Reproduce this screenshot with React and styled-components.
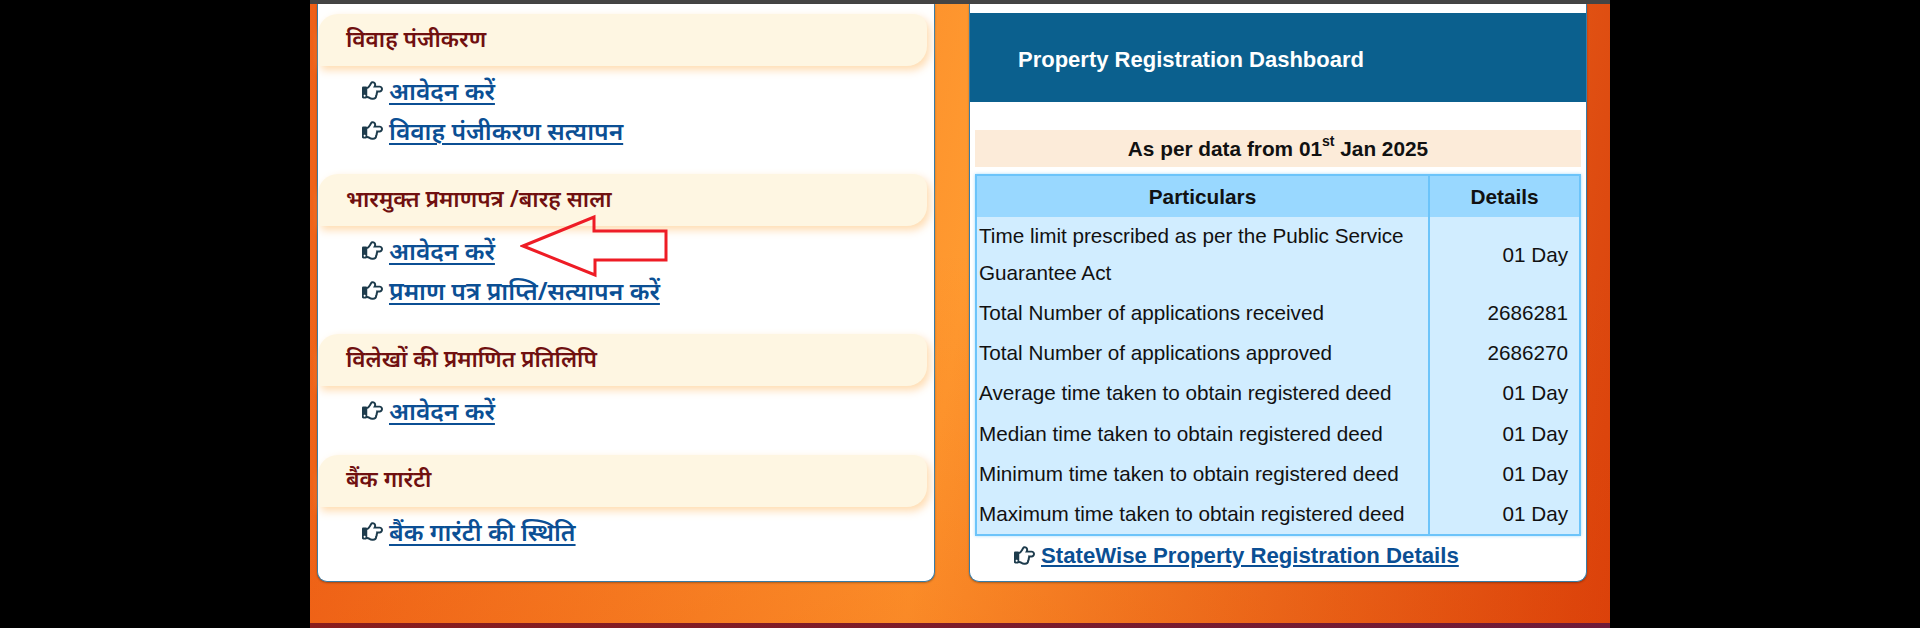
import styled, { createGlobalStyle } from "styled-components";
import { FaRegHandPointRight } from "react-icons/fa";

const GlobalStyle = createGlobalStyle`
  html, body {
    margin: 0;
    padding: 0;
    background: #000;
  }
  body {
    font-family: "Liberation Sans", Arial, sans-serif;
  }
`;

const Page = styled.div`
  width: 1300px;
  height: 628px;
  margin-left: 310px;
  box-sizing: border-box;
  overflow: hidden;
  display: flex;
  flex-direction: column;
  background:
    linear-gradient(180deg, rgba(230, 70, 0, 0) 40%, rgba(230, 70, 0, 0.2) 100%),
    linear-gradient(100deg, #ee6018 0%, #ff9a30 50%, #d9400c 100%);
`;

const TopStrip = styled.div`
  height: 4px;
  flex: none;
  background: #444;
`;

const Columns = styled.div`
  flex: 1;
  display: flex;
  gap: 34px;
  padding: 0 23px 0 7px;
  align-items: flex-start;
`;

const Panel = styled.div`
  box-sizing: border-box;
  width: 618px;
  height: 578px;
  background: #fff;
  border: 1px solid #3a7ca5;
  border-top: none;
  border-radius: 0 0 10px 10px;
  box-shadow: 0 1px 2px rgba(0, 0, 0, 0.3);
`;

const LeftPanel = styled(Panel)`
  padding-top: 10px;
`;

const Section = styled.section`
  margin-bottom: ${(props) => props.gap}px;
`;

const SectionTitle = styled.h3`
  box-sizing: border-box;
  margin: 0;
  width: 609px;
  height: 52px;
  padding: 0 0 4px 28px;
  display: flex;
  align-items: center;
  background: #fef6e2;
  border-radius: 20px 14px 20px 0;
  box-shadow: 3px 4px 8px rgba(255, 200, 130, 0.65);
  color: #701010;
  font-family: "Noto Sans", "Liberation Sans", sans-serif;
  font-size: 22.6px;
  font-weight: 600;
`;

const Links = styled.ul`
  list-style: none;
  margin: 0;
  padding: 5px 0 0 44px;
`;

const LinkRow = styled.li`
  height: 39.5px;
  display: flex;
  align-items: center;
  gap: 6px;
`;

const Hand = styled(FaRegHandPointRight)`
  flex: none;
  width: 21px;
  height: 21px;
  color: #1d3b4c;
`;

const HindiLink = styled.a`
  color: #0b4f94;
  text-decoration: underline;
  text-decoration-thickness: 2px;
  text-underline-offset: 3px;
  font-family: "Noto Sans", "Liberation Sans", sans-serif;
  font-size: 24.5px;
  font-weight: 600;
`;

const RightPanel = styled(Panel)`
  display: flex;
  flex-direction: column;
  padding-top: 9px;
`;

const DashHeader = styled.div`
  box-sizing: border-box;
  height: 89px;
  flex: none;
  display: flex;
  align-items: center;
  padding: 5px 0 0 48px;
  background: #0b608e;
  color: #fff;
  font-size: 22px;
  font-weight: 700;
`;

const TableWrap = styled.div`
  padding: 28px 5px 0 5px;
`;

const DataNote = styled.div`
  height: 37px;
  display: flex;
  align-items: center;
  justify-content: center;
  background: #fcebd9;
  color: #111;
  font-size: 20.8px;
  font-weight: 700;

  sup {
    font-size: 14px;
    align-self: flex-start;
    margin-top: 3px;
  }
`;

const Table = styled.table`
  box-sizing: border-box;
  width: 606px;
  margin-top: 7px;
  border-collapse: collapse;
  table-layout: fixed;
  background: #d1edff;
  border: 2px solid #6cc4fa;
  box-shadow: 0 0 3px rgba(108, 196, 250, 0.6);
  color: #111;
  font-size: 20.7px;
`;

const Th = styled.th`
  height: 41px;
  padding: 0;
  background: #99d8ff;
  font-size: 20.8px;
  font-weight: 700;
  text-align: center;
  border-left: ${(props) => (props.$divider ? "2px solid #6cc4fa" : "none")};
`;

const Td = styled.td`
  height: 40.2px;
  padding: 0 2px ${(props) => (props.$wrapped ? "1.5px" : "0")};
  line-height: 37px;
`;

const ValueTd = styled(Td)`
  padding-right: 11px;
  text-align: right;
  border-left: 2px solid #6cc4fa;
`;

const StateRow = styled.div`
  display: flex;
  align-items: center;
  gap: 6px;
  padding: 7px 0 0 39px;
`;

const StateLink = styled.a`
  color: #0b4f94;
  text-decoration: underline;
  font-size: 22.2px;
  font-weight: 700;
`;

const BottomStrip = styled.div`
  height: 5px;
  flex: none;
  background: linear-gradient(90deg, #8a1c1c, #6e1a3a);
`;

const ArrowMark = styled.svg`
  position: absolute;
  left: 520px;
  top: 214px;
`;

const sections = [
  { title: "विवाह पंजीकरण", links: ["आवेदन करें", "विवाह पंजीकरण सत्यापन"], gap: 24 },
  { title: "भारमुक्त प्रमाणपत्र /बारह साला", links: ["आवेदन करें", "प्रमाण पत्र प्राप्ति/सत्यापन करें"], gap: 24 },
  { title: "विलेखों की प्रमाणित प्रतिलिपि", links: ["आवेदन करें"], gap: 24 },
  { title: "बैंक गारंटी", links: ["बैंक गारंटी की स्थिति"], gap: 0 },
];

const rows = [
  ["Total Number of applications received", "2686281"],
  ["Total Number of applications approved", "2686270"],
  ["Average time taken to obtain registered deed", "01 Day"],
  ["Median time taken to obtain registered deed", "01 Day"],
  ["Minimum time taken to obtain registered deed", "01 Day"],
  ["Maximum time taken to obtain registered deed", "01 Day"],
];

const App = () => {
  return (
    <>
      <GlobalStyle />
      <Page>
        <TopStrip />
        <Columns>
          <LeftPanel>
            {sections.map((section) => (
              <Section key={section.title} gap={section.gap}>
                <SectionTitle>{section.title}</SectionTitle>
                <Links>
                  {section.links.map((link) => (
                    <LinkRow key={link}>
                      <Hand />
                      <HindiLink href="#">{link}</HindiLink>
                    </LinkRow>
                  ))}
                </Links>
              </Section>
            ))}
          </LeftPanel>
          <RightPanel>
            <DashHeader>Property Registration Dashboard</DashHeader>
            <TableWrap>
              <DataNote>
                As per data from 01<sup>st</sup>&nbsp;Jan 2025
              </DataNote>
              <Table>
                <colgroup>
                  <col width="453" />
                  <col />
                </colgroup>
                <thead>
                  <tr>
                    <Th>Particulars</Th>
                    <Th $divider>Details</Th>
                  </tr>
                </thead>
                <tbody>
                  <tr>
                    <Td $wrapped>Time limit prescribed as per the Public Service Guarantee Act</Td>
                    <ValueTd>01 Day</ValueTd>
                  </tr>
                  {rows.map(([label, value]) => (
                    <tr key={label}>
                      <Td>{label}</Td>
                      <ValueTd>{value}</ValueTd>
                    </tr>
                  ))}
                </tbody>
              </Table>
              <StateRow>
                <Hand />
                <StateLink href="#">StateWise Property Registration Details</StateLink>
              </StateRow>
            </TableWrap>
          </RightPanel>
        </Columns>
        <BottomStrip />
      </Page>
      <ArrowMark width="150" height="66" viewBox="0 0 150 66">
        <path d="M3 32 L74 3 V17 H146 V46 H75 V61 Z" fill="none" stroke="#ee1c25" strokeWidth="3" />
      </ArrowMark>
    </>
  );
};

export default App;
